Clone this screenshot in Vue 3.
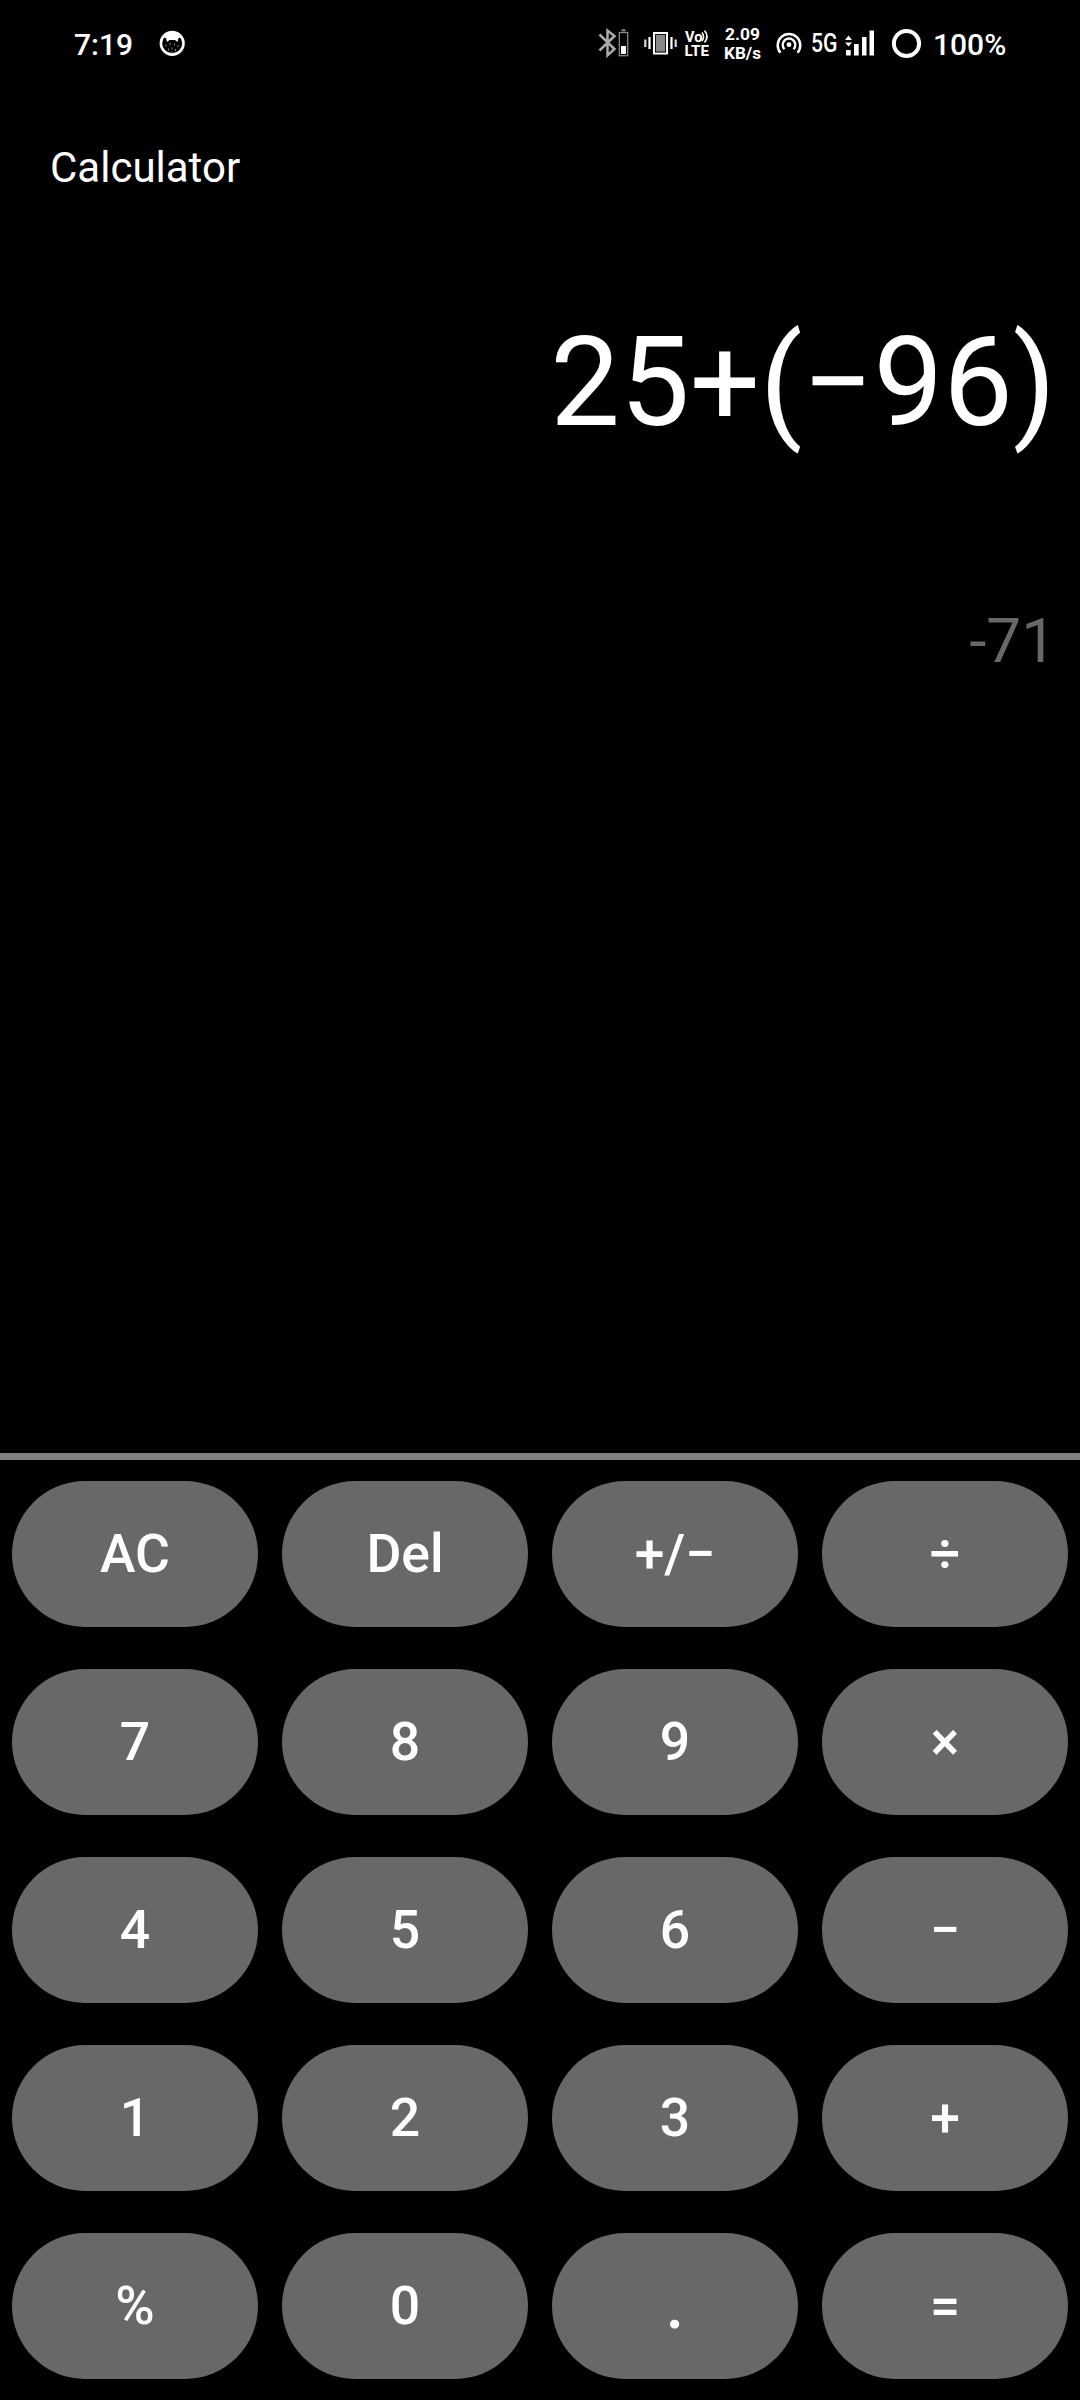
<script setup>
import { ref } from 'vue'

const expression = ref('25+(−96)')
const result = ref('-71')
const keys = [
  'AC', 'Del', '+/−', '÷',
  '7', '8', '9', '×',
  '4', '5', '6', '−',
  '1', '2', '3', '+',
  '%', '0', '.', '=',
]
</script>

<template>
  <div class="screen">
    <header class="status">
      <div class="side">
        <span class="clock">7:19</span>
        <!-- notification: cat badge -->
        <svg width="28" height="88" viewBox="158 0 28 88">
          <circle cx="172.200" cy="43.300" r="11.300" fill="#000" stroke="#fff" stroke-width="2.600" />
          <path d="M163 37.500Q166 32 172.200 32Q178.400 32 181.500 37.500L178.500 38L177.500 42L175 40H169.500L167 42L166 38Z" fill="#fff" />
          <path d="M166 44.500v2M170 43v2M174.500 43.500v2M178 45v2M168.500 48.500v2M172 47.500v2M175.500 49v2M172 51.500v1.500" stroke="#888" stroke-width="1" />
        </svg>
      </div>
      <div class="side">
        <!-- bluetooth with device battery -->
        <svg width="40" height="88" viewBox="594 0 40 88">
          <path d="M599.500 34.500L614.500 49L607.500 55.500V30.500L614.500 36L599.500 50.500" fill="none" stroke="#aaa" stroke-width="2.500" />
          <rect x="619.300" y="32.500" width="8.400" height="23.200" fill="none" stroke="#888" stroke-width="1.300" />
          <path d="M621.500 30.300h4" stroke="#888" stroke-width="2" />
          <rect x="621" y="46" width="5" height="8" fill="#fff" />
        </svg>
        <!-- vibrate -->
        <svg width="48" height="88" viewBox="634 0 48 88">
          <rect x="654" y="33" width="13" height="20.500" fill="#888" stroke="#fff" stroke-width="2" />
          <rect x="655.500" y="34.500" width="10" height="17.500" fill="none" stroke="#111" stroke-width="1" />
          <path d="M649.500 37v12M671.500 37v12" stroke="#fff" stroke-width="2.200" />
          <path d="M645.300 39.500v7.500M675.700 39.500v7.500" stroke="#ddd" stroke-width="2.200" />
        </svg>
        <!-- VoLTE -->
        <svg width="38" height="88" viewBox="682 0 38 88">
          <text x="685" y="42" font-size="14.500" font-weight="700" textLength="17.500" lengthAdjust="spacingAndGlyphs">Vo</text>
          <path d="M702 32.500Q705 36.500 702 41M704.500 30.500Q709.500 36.500 704.500 42.500" fill="none" stroke="#fff" stroke-width="1.600" />
          <text x="684.500" y="55.500" font-size="15" font-weight="700" textLength="24.500" lengthAdjust="spacingAndGlyphs">LTE</text>
        </svg>
        <!-- network speed -->
        <svg width="50" height="88" viewBox="720 0 50 88">
          <text x="725" y="40" font-size="17" font-weight="700" textLength="35" lengthAdjust="spacingAndGlyphs">2.09</text>
          <text x="724" y="59" font-size="17" font-weight="700" textLength="37" lengthAdjust="spacingAndGlyphs">KB/s</text>
        </svg>
        <!-- hotspot -->
        <svg width="38" height="88" viewBox="770 0 38 88">
          <path d="M780.500 52.800A11.300 11.300 0 1 1 797.500 52.800" fill="none" stroke="#fff" stroke-width="2.500" />
          <path d="M784.500 49.200A6.300 6.300 0 1 1 793.500 49.200" fill="none" stroke="#fff" stroke-width="2.300" />
          <circle cx="789" cy="44.700" r="2.400" fill="#fff" />
        </svg>
        <!-- mobile signal -->
        <svg width="76" height="88" viewBox="808 0 76 88">
          <text x="811" y="52" font-size="25.500" font-weight="500" textLength="26.500" lengthAdjust="spacingAndGlyphs">5G</text>
          <path d="M845 40l3.500-4.500L852 40zM845 42.500l3.500 4L852 42.500z" fill="#fff" />
          <path d="M846 50h4.700v5.500H846zM854 44h4.700v11.500H854zM862 37h4.500v18.500H862zM869.500 30.500h4.500v25h-4.500z" fill="#fff" />
        </svg>
        <!-- battery ring -->
        <svg width="50" height="88" viewBox="884 0 50 88">
          <circle cx="906.500" cy="43.500" r="12.600" fill="none" stroke="#fff" stroke-width="4" />
        </svg>
        <span class="battery">100%</span>
      </div>
    </header>

    <h1 class="title">Calculator</h1>

    <main class="display">
      <div class="expression">{{ expression }}</div>
      <div class="result">{{ result }}</div>
    </main>

    <section class="keypad">
      <button
        v-for="key in keys"
        :key="key"
        class="key"
        :class="{ point: key === '.' }"
        type="button"
      >{{ key }}</button>
    </section>
  </div>
</template>

<style>
body {
  margin: 0;
  background: #000;
}
</style>

<style scoped>
.screen {
  display: flex;
  flex-direction: column;
  width: 1080px;
  height: 2400px;
  overflow: hidden;
  background: #000;
  color: #fff;
  font-family: Roboto, "Liberation Sans", sans-serif;
}
.status {
  display: flex;
  justify-content: space-between;
  height: 88px;
  padding: 0 73px 0 74px;
}
.side {
  display: flex;
  align-items: flex-start;
}
.side svg {
  display: block;
  flex: none;
}
.side svg text {
  fill: #fff;
}
.clock,
.battery {
  font-size: 30px;
  font-weight: 500;
  line-height: 89px;
}
.clock {
  width: 84px;
}
.battery {
  width: 74px;
  margin-left: -1px;
}
.title {
  margin: 0;
  padding-left: 50px;
  height: 160px;
  line-height: 160px;
  font-size: 42px;
  font-weight: 400;
}
.display {
  display: flex;
  flex-direction: column;
  align-items: flex-end;
  box-sizing: border-box;
  height: 1205px;
  padding: 61px 24px 0 0;
}
.expression {
  font-size: 124px;
  line-height: 147px;
}
.result {
  margin-top: 148px;
  font-size: 62px;
  line-height: 73px;
  color: #696866;
}
.keypad {
  display: grid;
  grid-template-columns: repeat(4, 246px);
  grid-auto-rows: 146px;
  gap: 42px 24px;
  padding: 21px 12px;
  border-top: 7px solid #808080;
}
.key {
  padding: 0 0 2px;
  border: 0;
  border-radius: 73px;
  background: #696866;
  color: #fff;
  font: 500 53.5px Roboto, "Liberation Sans", sans-serif;
}
.key.point {
  font-size: 66px;
}
</style>
